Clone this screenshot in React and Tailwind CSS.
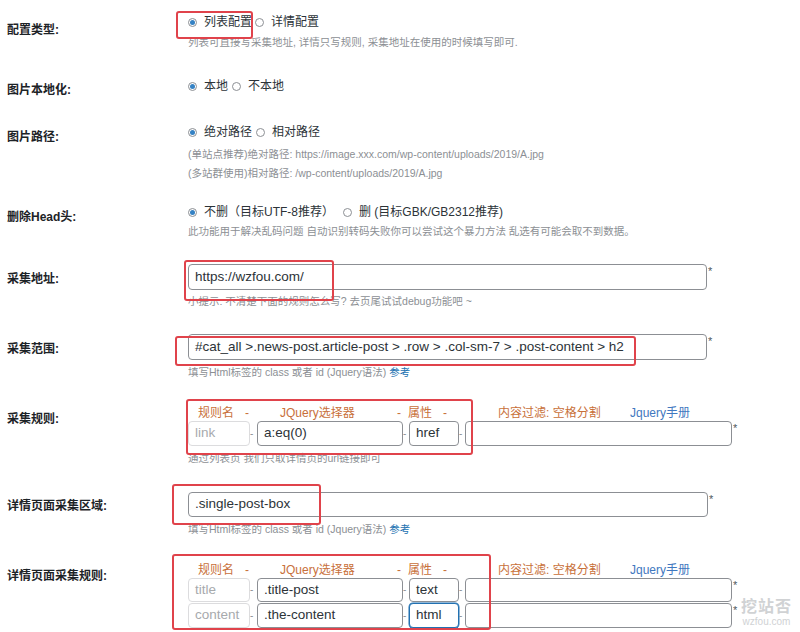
import React from 'react';

const font = { fontFamily: '"Liberation Sans", "Noto Sans CJK SC", sans-serif' };

function Radio({ checked }) {
  return (
    <span className="inline-flex w-[9px] h-[9px] shrink-0 rounded-full border border-[#8c8f94] bg-white items-center justify-center">
      {checked && <span className="w-[5px] h-[5px] rounded-full bg-[#3582c4]" />}
    </span>
  );
}

function RadioLine({ first, second, gap = 'ml-[3px]' }) {
  return (
    <div className="flex items-center h-[18px] text-[12px] text-[#2c3338]">
      <Radio checked />
      <span className="ml-[7px] whitespace-nowrap">{first}</span>
      <span className={`${gap} flex`}><Radio /></span>
      <span className="ml-[7px] whitespace-nowrap">{second}</span>
    </div>
  );
}

function Input({ value, w, h = 'h-[25px]', muted, focused }) {
  let border = 'border-[#8c8f94]';
  if (muted) border = 'border-[#dcdcde]';
  if (focused) border = 'border-[#2271b1] shadow-[0_0_0_0.5px_#2271b1]';
  return (
    <div
      className={`${w} ${h} shrink-0 rounded-[4px] border ${border} bg-white flex items-center px-[6px] text-[13.5px] whitespace-nowrap overflow-hidden ${muted ? 'text-[#a7aaad]' : 'text-[#2c3338]'}`}
    >
      {value}
    </div>
  );
}

function Star() {
  return <span className="ml-[1px] self-start text-[11px] leading-[14px] text-[#50575e]">*</span>;
}

function Dash({ w }) {
  return <span className={`${w} shrink-0 text-[10px] text-[#8c8f94] leading-none`}>-</span>;
}

function Hint({ children, className = '' }) {
  return <div className={`text-[10.5px] leading-[16px] text-[#8c8f94] whitespace-nowrap ${className}`}>{children}</div>;
}

function RuleHeader() {
  const o = 'shrink-0 whitespace-nowrap text-[#c8703a]';
  return (
    <div className="flex h-[16px] items-center text-[12px]">
      <span className="w-[10px] shrink-0" />
      <span className={`${o} w-[47px]`}>规则名</span>
      <span className={`${o} w-[35px]`}>-</span>
      <span className={`${o} w-[117px]`}>JQuery选择器</span>
      <span className={`${o} w-[11px]`}>-</span>
      <span className={`${o} w-[35px]`}>属性</span>
      <span className={`${o} w-[55px]`}>-</span>
      <span className={`${o} w-[132px]`}>内容过滤: 空格分割</span>
      <span className="shrink-0 whitespace-nowrap text-[#3f78c0]">Jquery手册</span>
    </div>
  );
}

function RuleRow({ name, selector, attr, h, focused }) {
  return (
    <div className="flex items-center">
      <Input value={name} w="w-[62px]" h={h} muted />
      <Dash w="w-[7px]" />
      <Input value={selector} w="w-[146px]" h={h} />
      <Dash w="w-[6px]" />
      <Input value={attr} w="w-[50px]" h={h} focused={focused} />
      <Dash w="w-[6px]" />
      <Input value="" w="w-[267px]" h={h} />
      <Star />
    </div>
  );
}

function Row({ label, labelPt, h, children }) {
  return (
    <div className={`flex ${h}`}>
      <div className="w-[188px] shrink-0 pl-[7px]" style={{ paddingTop: labelPt }}>
        <span className="text-[12px] leading-[18px] font-bold text-[#1d2327] whitespace-nowrap">{label}</span>
      </div>
      <div className="flex-1 min-w-0">{children}</div>
    </div>
  );
}

export default function App() {
  const links = 'text-[#2271b1]';
  return (
    <div className="relative w-[800px] h-[632px] overflow-hidden bg-white pt-[13px]" style={font}>
      <Row label="配置类型:" labelPt={4} h="h-[64px]">
        <RadioLine first="列表配置" second="详情配置" gap="ml-[3px]" />
        <Hint className="mt-[3px]">列表可直接写采集地址, 详情只写规则, 采集地址在使用的时候填写即可.</Hint>
      </Row>

      <Row label="图片本地化:" labelPt={0} h="h-[46px]">
        <RadioLine first="本地" second="不本地" gap="ml-[4px]" />
      </Row>

      <Row label="图片路径:" labelPt={1} h="h-[80px]">
        <RadioLine first="绝对路径" second="相对路径" gap="ml-[4px]" />
        <div className="mt-[4px]">
          <Hint className="leading-[19px]">(单站点推荐)绝对路径: https://image.xxx.com/wp-content/uploads/2019/A.jpg</Hint>
          <Hint className="leading-[19px]">(多站群使用)相对路径: /wp-content/uploads/2019/A.jpg</Hint>
        </div>
      </Row>

      <Row label="删除Head头:" labelPt={1} h="h-[61px]">
        <RadioLine first="不删（目标UTF-8推荐）" second="删 (目标GBK/GB2312推荐)" gap="ml-[9px]" />
        <Hint className="mt-[2px]">此功能用于解决乱码问题 自动识别转码失败你可以尝试这个暴力方法 乱选有可能会取不到数据。</Hint>
      </Row>

      <Row label="采集地址:" labelPt={2} h="h-[70px]">
        <div className="flex">
          <Input value="https://wzfou.com/" w="w-[519px]" h="h-[26px]" />
          <Star />
        </div>
        <Hint className="mt-[3px]">小提示: 不清楚下面的规则怎么写? 去页尾试试debug功能吧 ~</Hint>
      </Row>

      <Row label="采集范围:" labelPt={2} h="h-[71px]">
        <div className="flex">
          <Input value="#cat_all >.news-post.article-post > .row > .col-sm-7 > .post-content > h2" w="w-[519px]" h="h-[26px]" />
          <Star />
        </div>
        <Hint className="mt-[4px]">
          填写Html标签的 class 或者 id (Jquery语法) <span className={links}>参考</span>
        </Hint>
      </Row>

      <Row label="采集规则:" labelPt={1} h="h-[87px]">
        <RuleHeader />
        <RuleRow name="link" selector="a:eq(0)" attr="href" h="h-[25px]" />
        <Hint className="mt-[4px]">通过列表页 我们只取详情页的url链接即可</Hint>
      </Row>

      <Row label="详情页面采集区域:" labelPt={1} h="h-[70px]">
        <div className="flex">
          <Input value=".single-post-box" w="w-[520px]" h="h-[25px]" />
          <Star />
        </div>
        <Hint className="mt-[4px]">
          填写Html标签的 class 或者 id (Jquery语法) <span className={links}>参考</span>
        </Hint>
      </Row>

      <Row label="详情页面采集规则:" labelPt={1} h="h-[70px]">
        <RuleHeader />
        <RuleRow name="title" selector=".title-post" attr="text" h="h-[24px]" />
        <div className="h-[1px]" />
        <RuleRow name="content" selector=".the-content" attr="html" h="h-[25px]" focused />
      </Row>

      {/* annotation boxes drawn over the form */}
      <div className="absolute left-[176px] top-[11px] w-[77px] h-[28px] rounded-[3px] border-2 border-[#e0434b]" />
      <div className="absolute left-[184px] top-[260px] w-[150px] h-[41px] rounded-[3px] border-2 border-[#e0434b]" />
      <div className="absolute left-[175px] top-[336px] w-[461px] h-[30px] rounded-[3px] border-2 border-[#e0434b]" />
      <div className="absolute left-[186px] top-[399px] w-[287px] h-[56px] rounded-[3px] border-2 border-[#e0434b]" />
      <div className="absolute left-[172px] top-[484px] w-[149px] h-[41px] rounded-[3px] border-2 border-[#e0434b]" />
      <div className="absolute left-[172px] top-[554px] w-[319px] h-[76px] rounded-[3px] border-2 border-[#e0434b]" />

      {/* watermark */}
      <div className="absolute left-[741px] top-[598px] flex flex-col items-center text-[#d0d2d4]">
        <span className="text-[16px] leading-[18px] font-bold tracking-[1px]">挖站否</span>
        <span className="text-[10px] leading-[11px]">wzfou.com</span>
      </div>
    </div>
  );
}
